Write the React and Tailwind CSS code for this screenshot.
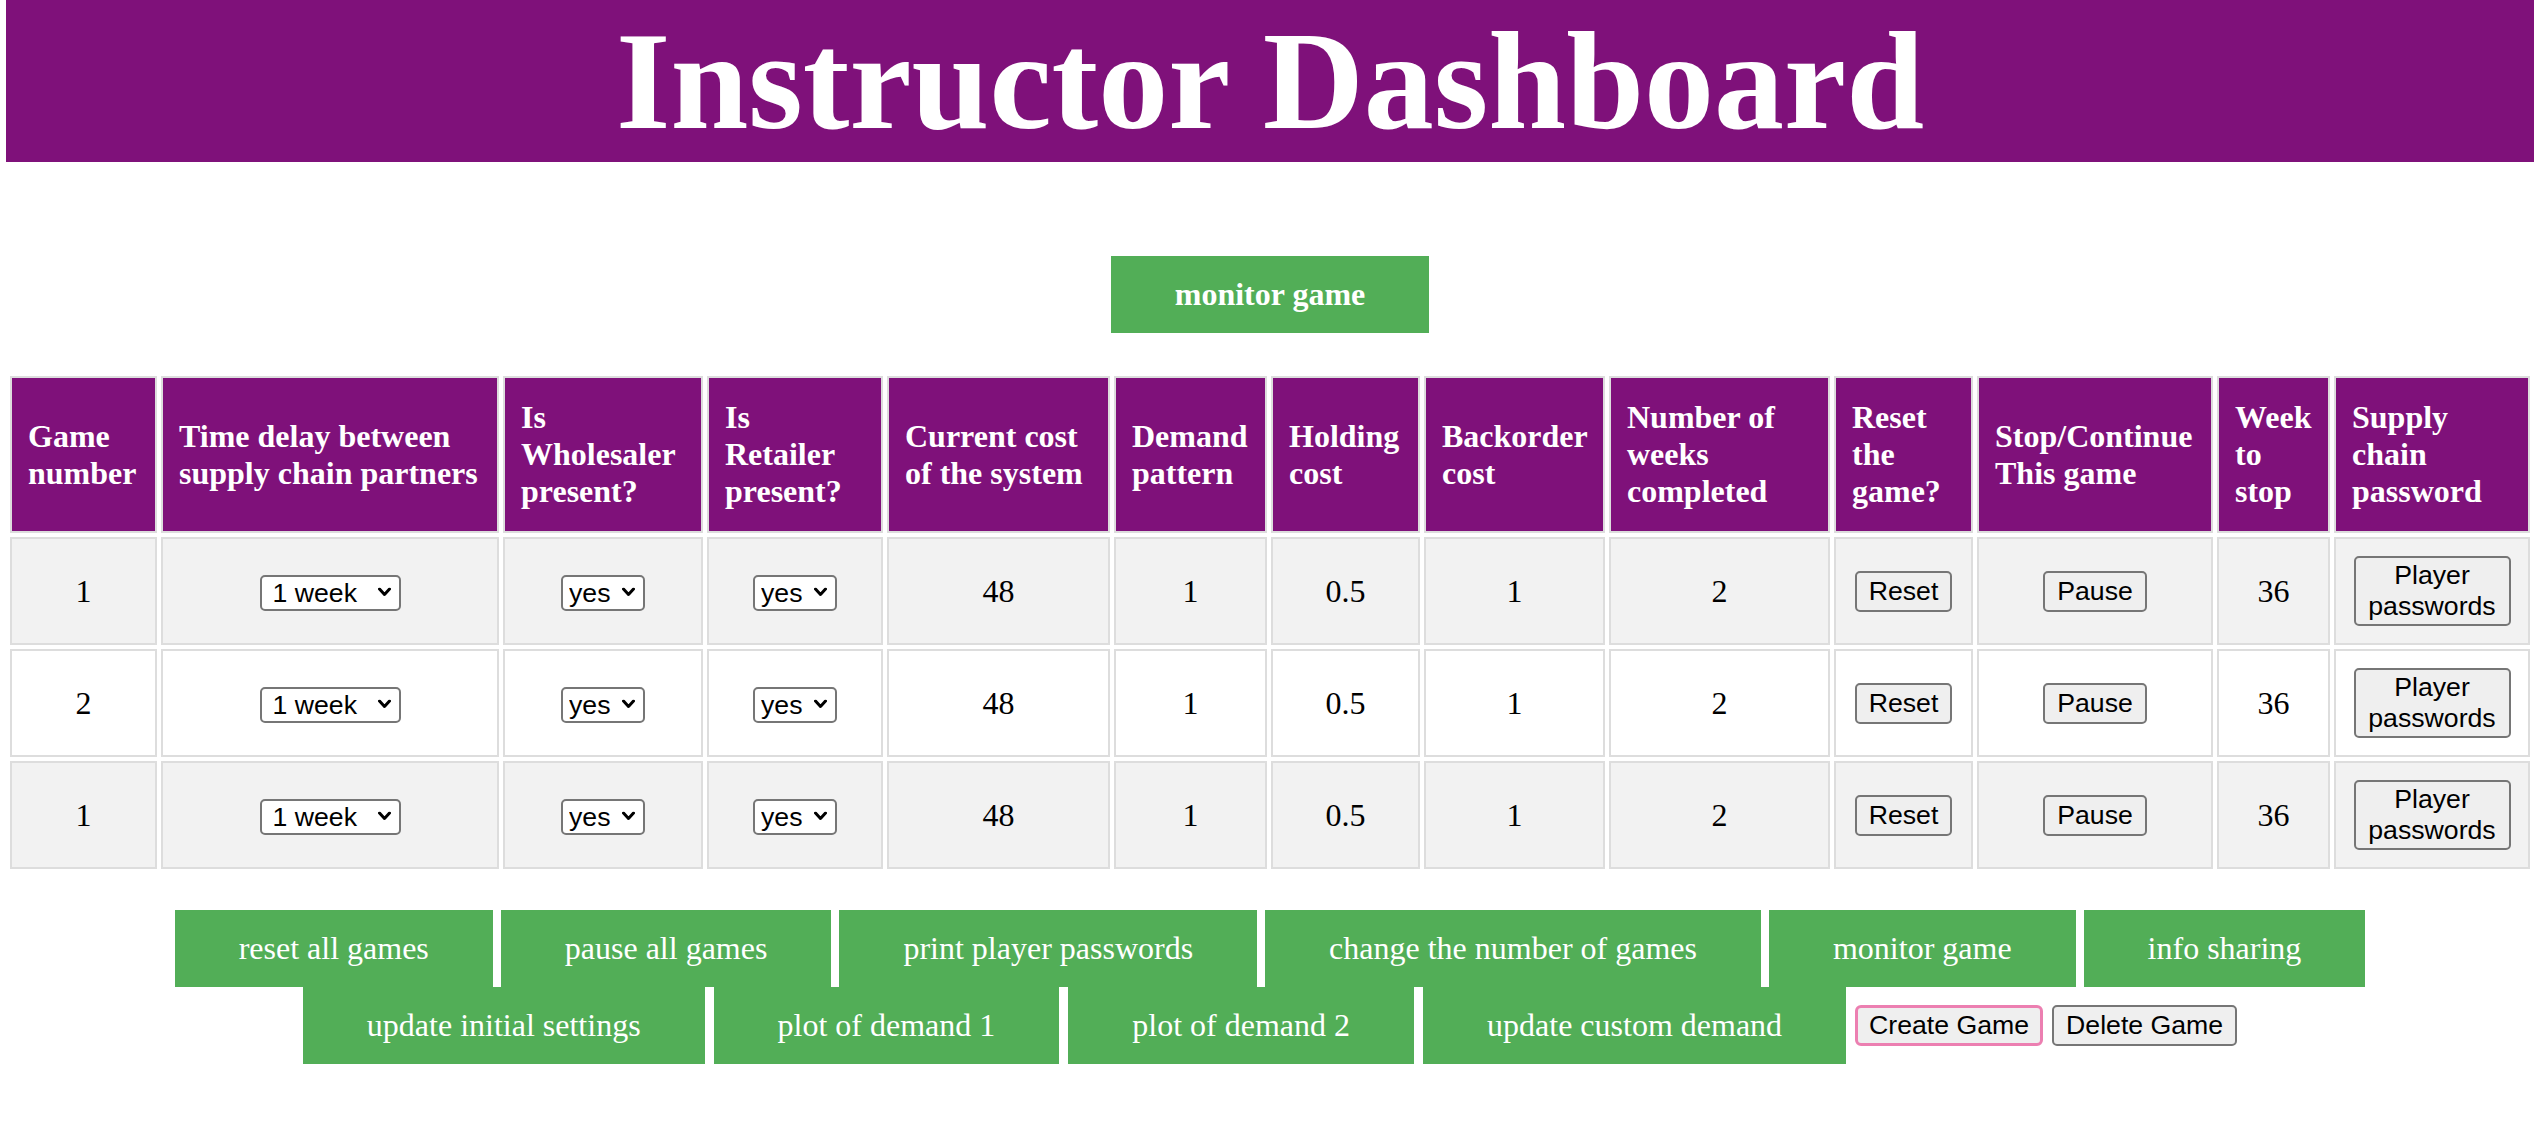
import { useState } from 'react';

const columns = [
    { label: 'Game number', width: 'w-[147px]' },
    { label: 'Time delay between supply chain partners', width: 'w-[338px]' },
    { label: 'Is Wholesaler present?', width: 'w-[200px]' },
    { label: 'Is Retailer present?', width: 'w-[176px]' },
    { label: 'Current cost of the system', width: 'w-[223px]' },
    { label: 'Demand pattern', width: 'w-[153px]' },
    { label: 'Holding cost', width: 'w-[149px]' },
    { label: 'Backorder cost', width: 'w-[181px]' },
    { label: 'Number of weeks completed', width: 'w-[221px]' },
    { label: 'Reset the game?', width: 'w-[139px]' },
    { label: 'Stop/Continue This game', width: 'w-[236px]' },
    { label: 'Week to stop', width: 'w-[113px]' },
    { label: 'Supply chain password', width: 'w-[196px]' },
];

const initialGames = [
    { id: 1, number: 1, delay: '1', wholesaler: 'yes', retailer: 'yes', cost: 48, pattern: 1, holding: 0.5, backorder: 1, weeks: 2, stop: 36 },
    { id: 2, number: 2, delay: '1', wholesaler: 'yes', retailer: 'yes', cost: 48, pattern: 1, holding: 0.5, backorder: 1, weeks: 2, stop: 36 },
    { id: 3, number: 1, delay: '1', wholesaler: 'yes', retailer: 'yes', cost: 48, pattern: 1, holding: 0.5, backorder: 1, weeks: 2, stop: 36 },
];

const topActions = ['reset all games', 'pause all games', 'print player passwords', 'change the number of games', 'monitor game', 'info sharing'];
const bottomActions = ['update initial settings', 'plot of demand 1', 'plot of demand 2', 'update custom demand'];

const sans = "font-['Liberation_Sans',Arial,sans-serif]";

function Chevron() {
    return (
        <svg width="13" height="9" viewBox="0 0 13 9" className="pointer-events-none absolute right-[10px] top-1/2 -translate-y-1/2">
            <path d="M1.5 1.5 L6.5 7 L11.5 1.5" fill="none" stroke="#000" strokeWidth="3" strokeLinecap="round" strokeLinejoin="round" />
        </svg>
    );
}

function Dropdown({ value, onChange, options, width, pad }) {
    return (
        <div className={`relative inline-block align-middle ${width}`}>
            <select
                value={value}
                onChange={e => onChange(e.target.value)}
                className={`${sans} ${pad} appearance-none w-full h-[36px] pr-[20px] text-[26.67px] leading-[normal] text-black bg-white border-2 border-[#767676] rounded-[5px]`}
            >
                {options.map(o => (
                    <option key={o.value} value={o.value}>{o.label}</option>
                ))}
            </select>
            <Chevron />
        </div>
    );
}

function GrayButton({ children, className = 'py-[3px]' }) {
    return (
        <button className={`${sans} text-[26.67px] leading-[normal] text-black bg-[#efefef] border-2 border-[#767676] rounded-[5px] px-[12px] ${className}`}>
            {children}
        </button>
    );
}

export default function App() {
    const [games, setGames] = useState(initialGames);

    const update = (id, key, value) => {
        setGames(gs => gs.map(g => (g.id === id ? { ...g, [key]: value } : g)));
    };

    return (
        <div className="min-h-screen bg-white pl-[6px] pr-[10px] pb-[40px] font-['Liberation_Serif','Times_New_Roman',serif] text-black">
            <h1 className="bg-[#7f117a] text-white text-center font-bold text-[140px] leading-[162px]">
                Instructor Dashboard
            </h1>

            <div className="flex justify-center mt-[94px]">
                <button className="bg-[#52ae57] text-white font-bold text-[32px] leading-[normal] px-[64px] py-[20px]">
                    monitor game
                </button>
            </div>

            {/* Games table */}
            <table className="mt-[39px] w-full table-fixed border-separate border-spacing-[4px]">
                <thead>
                    <tr>
                        {columns.map(col => (
                            <th
                                key={col.label}
                                className={`${col.width} bg-[#7f117a] text-white text-left font-bold text-[32px] leading-[normal] px-[16px] py-[21px] border-2 border-[#dddddd] align-middle`}
                            >
                                {col.label}
                            </th>
                        ))}
                    </tr>
                </thead>
                <tbody>
                    {games.map((g, i) => {
                        const cell = `border-2 border-[#dddddd] text-center text-[32px] leading-[normal] px-[8px] py-[17px] align-middle ${i % 2 === 0 ? 'bg-[#f2f2f2]' : 'bg-white'}`;
                        return (
                            <tr key={g.id}>
                                <td className={cell}>{g.number}</td>
                                <td className={cell}>
                                    <Dropdown
                                        value={g.delay}
                                        onChange={v => update(g.id, 'delay', v)}
                                        width="w-[141px]"
                                        pad="pl-[11px]"
                                        options={[
                                            { value: '1', label: '1 week' },
                                            { value: '2', label: '2 weeks' },
                                            { value: '3', label: '3 weeks' },
                                        ]}
                                    />
                                </td>
                                <td className={cell}>
                                    <Dropdown
                                        value={g.wholesaler}
                                        onChange={v => update(g.id, 'wholesaler', v)}
                                        width="w-[84px]"
                                        pad="pl-[6px]"
                                        options={[{ value: 'yes', label: 'yes' }, { value: 'no', label: 'no' }]}
                                    />
                                </td>
                                <td className={cell}>
                                    <Dropdown
                                        value={g.retailer}
                                        onChange={v => update(g.id, 'retailer', v)}
                                        width="w-[84px]"
                                        pad="pl-[6px]"
                                        options={[{ value: 'yes', label: 'yes' }, { value: 'no', label: 'no' }]}
                                    />
                                </td>
                                <td className={cell}>{g.cost}</td>
                                <td className={cell}>{g.pattern}</td>
                                <td className={cell}>{g.holding}</td>
                                <td className={cell}>{g.backorder}</td>
                                <td className={cell}>{g.weeks}</td>
                                <td className={cell}><GrayButton>Reset</GrayButton></td>
                                <td className={cell}><GrayButton>Pause</GrayButton></td>
                                <td className={cell}>{g.stop}</td>
                                <td className={cell}>
                                    <GrayButton className="w-[157px] py-[2px]">Player passwords</GrayButton>
                                </td>
                            </tr>
                        );
                    })}
                </tbody>
            </table>

            {/* Global actions */}
            <div className="mt-[37px] flex flex-col items-center">
                <div className="flex gap-[8px]">
                    {topActions.map(label => (
                        <button key={label} className="bg-[#52ae57] text-white text-[32px] leading-[normal] px-[64px] py-[20px]">
                            {label}
                        </button>
                    ))}
                </div>
                <div className="flex items-center gap-[9px]">
                    {bottomActions.map(label => (
                        <button key={label} className="bg-[#52ae57] text-white text-[32px] leading-[normal] px-[64px] py-[20px]">
                            {label}
                        </button>
                    ))}
                    <button className={`${sans} text-[26.67px] leading-[normal] text-black bg-[#efefef] border-[3px] border-[#ec7fb1] rounded-[6px] px-[11px] py-[2px]`}>
                        Create Game
                    </button>
                    <GrayButton>Delete Game</GrayButton>
                </div>
            </div>
        </div>
    );
}
